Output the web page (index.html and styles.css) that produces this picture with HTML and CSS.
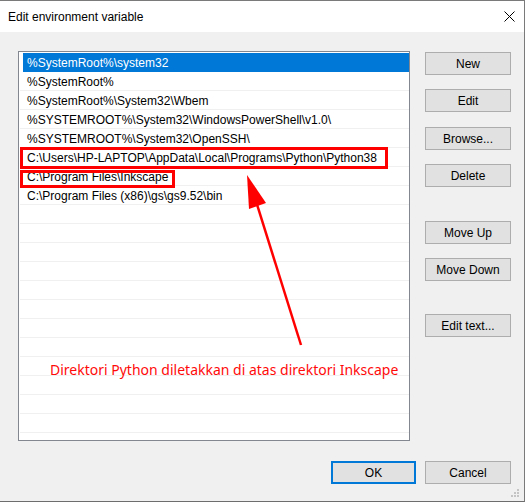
FILE: index.html
```html
<!DOCTYPE html>
<html>
<head>
<meta charset="utf-8">
<link rel="stylesheet" href="styles.css">
</head>
<body>
<div class="window">
  <div class="titlebar">
    <span class="title">Edit environment variable</span>
    <svg class="close" width="11" height="11" viewBox="0 0 11 11"><path d="M0.5 0.5 L10.5 10.5 M10.5 0.5 L0.5 10.5" stroke="#000" stroke-width="1"/></svg>
  </div>
  <div class="body">
    <div class="main">
      <div class="list">
        <div class="row sel"><span class="cell">%SystemRoot%\system32</span></div>
        <div class="row"><span class="cell">%SystemRoot%</span></div>
        <div class="row"><span class="cell">%SystemRoot%\System32\Wbem</span></div>
        <div class="row"><span class="cell">%SYSTEMROOT%\System32\WindowsPowerShell\v1.0\</span></div>
        <div class="row"><span class="cell">%SYSTEMROOT%\System32\OpenSSH\</span></div>
        <div class="row"><span class="cell">C:\Users\HP-LAPTOP\AppData\Local\Programs\Python\Python38</span></div>
        <div class="row"><span class="cell">C:\Program Files\Inkscape</span></div>
        <div class="row"><span class="cell">C:\Program Files (x86)\gs\gs9.52\bin</span></div>
        <div class="row"></div><div class="row"></div><div class="row"></div><div class="row"></div>
        <div class="row"></div><div class="row"></div><div class="row"></div><div class="row"></div>
        <div class="row"></div><div class="row"></div><div class="row"></div><div class="row"></div>
        <div class="row"></div>
      </div>
      <div class="buttons">
        <button class="btn">New</button>
        <button class="btn">Edit</button>
        <button class="btn gap15">Browse...</button>
        <button class="btn">Delete</button>
        <button class="btn gap34">Move Up</button>
        <button class="btn">Move Down</button>
        <button class="btn gap33">Edit text...</button>
      </div>
    </div>
    <div class="footer">
      <button class="btn default">OK</button>
      <button class="btn">Cancel</button>
    </div>
  </div>
  <div class="mark mark-python"></div>
  <div class="mark mark-inkscape"></div>
  <svg class="arrow" width="526" height="502" viewBox="0 0 526 502">
    <line x1="301" y1="345" x2="255" y2="198" stroke="#ff0000" stroke-width="2.5"/>
    <polygon points="247,175 249,209 266,203" fill="#ff0000"/>
  </svg>
  <div class="note">Direktori Python diletakkan di atas direktori Inkscape</div>
  <svg class="grip" width="9" height="9" viewBox="0 0 9 9">
    <rect x="6" y="0" width="2" height="2" fill="#c4c4c4"/>
    <rect x="3" y="3" width="2" height="2" fill="#c4c4c4"/>
    <rect x="6" y="3" width="2" height="2" fill="#c4c4c4"/>
    <rect x="0" y="6" width="2" height="2" fill="#c4c4c4"/>
    <rect x="3" y="6" width="2" height="2" fill="#c4c4c4"/>
    <rect x="6" y="6" width="2" height="2" fill="#c4c4c4"/>
  </svg>
</div>
</body>
</html>
```

FILE: styles.css
```css
html, body {
  margin: 0;
  padding: 0;
  background: #ffffff;
}
body {
  font-family: "Liberation Sans", Arial, sans-serif;
  font-size: 12px;
  color: #000;
}
.window {
  position: relative;
  width: 525px;
  height: 502px;
  box-sizing: border-box;
  border-top: 1px solid #7a7a7a;
  border-bottom: 1px solid #6d6d6d;
  border-right: 1px solid #7a7a7a;
  display: flex;
  flex-direction: column;
  background: #f0f0f0;
  overflow: hidden;
}
.titlebar {
  height: 31px;
  background: #fff;
  display: flex;
  align-items: center;
  justify-content: space-between;
  padding: 0 9px 0 8px;
  flex: none;
}
.title {
  font-size: 12px;
  line-height: 16px;
}
.close {
  display: block;
}
.body {
  flex: 1;
  padding: 19px 13px 0 18px;
  display: flex;
  flex-direction: column;
}
.main {
  display: flex;
  gap: 15px;
}
.list {
  width: 392px;
  height: 390px;
  box-sizing: border-box;
  border: 1px solid #828790;
  background: #fff;
  padding: 1px 0 0 1px;
  overflow: hidden;
}
.row {
  height: 19px;
  box-sizing: border-box;
  border-bottom: 1px solid #f0f0f0;
  padding-left: 3px;
  display: flex;
}
.cell {
  display: block;
  flex: 1;
  padding-left: 4px;
  height: 18px;
  line-height: 20px;
  white-space: nowrap;
}
.row.sel {
  border-bottom-color: transparent;
}
.row.sel .cell {
  background: #0078d7;
  color: #fff;
  height: 19px;
}
.buttons {
  display: flex;
  flex-direction: column;
  padding-top: 1px;
  gap: 14px;
}
.btn {
  width: 86px;
  height: 23px;
  box-sizing: border-box;
  background: #e1e1e1;
  border: 1px solid #adadad;
  font-family: "Liberation Sans", Arial, sans-serif;
  font-size: 12px;
  color: #000;
  padding: 0;
  margin: 0;
}
.gap15 { margin-top: 1px; }
.gap34 { margin-top: 20px; }
.gap33 { margin-top: 19px; }
.footer {
  display: flex;
  justify-content: flex-end;
  gap: 9px;
  margin-top: 20px;
}
.btn.default {
  border: 2px solid #0078d7;
  width: 85px;
}
.mark {
  position: absolute;
  box-sizing: border-box;
  border: 3px solid #ff0000;
}
.mark-python {
  left: 20px;
  top: 146px;
  width: 368px;
  height: 22px;
}
.mark-inkscape {
  left: 20px;
  top: 169px;
  width: 155px;
  height: 18px;
}
.arrow {
  position: absolute;
  left: 0;
  top: -1px;
  pointer-events: none;
}
.note {
  position: absolute;
  left: 50px;
  top: 359px;
  font-family: "Noto Sans", "Open Sans", sans-serif;
  font-size: 14px;
  line-height: 20px;
  color: #ff0a0a;
  white-space: nowrap;
}
.grip {
  position: absolute;
  right: 4px;
  bottom: 3px;
}
```
